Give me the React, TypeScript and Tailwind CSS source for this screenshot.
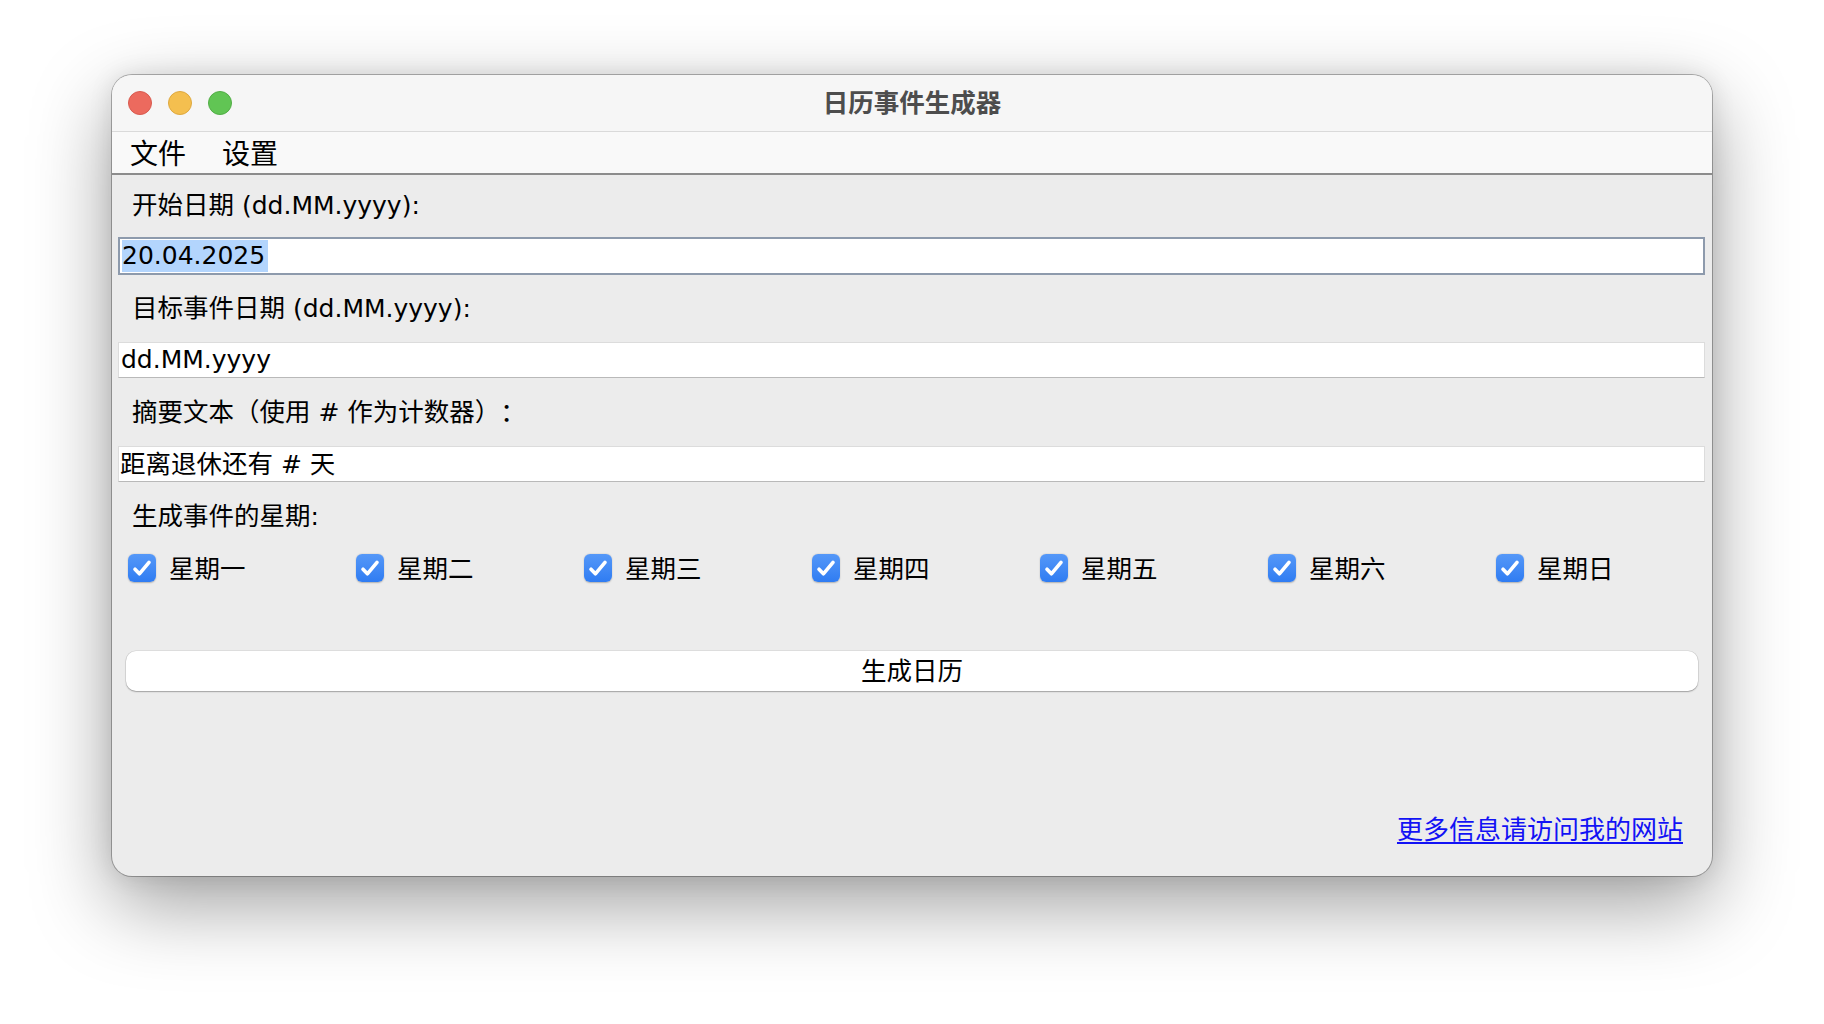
import React from "react";

const days = ["星期一", "星期二", "星期三", "星期四", "星期五", "星期六", "星期日"];

function Lt({ children }: { children: React.ReactNode }) {
  return <span className="font-['DejaVu_Sans',sans-serif] text-[25px]">{children}</span>;
}

function Check() {
  return (
    <div className="w-[28px] h-[28px] rounded-[6px] bg-linear-to-b from-[#5598f8] to-[#2f7cf2] shadow-[0_0.5px_1.5px_rgba(0,0,0,0.25)] flex items-center justify-center shrink-0">
      <svg width="28" height="28" viewBox="0 0 28 28">
        <path d="M7 15.2 L11.4 19.8 L21 8.4" fill="none" stroke="#ffffff" strokeWidth="3.6" strokeLinecap="round" strokeLinejoin="round" />
      </svg>
    </div>
  );
}

export default function App() {
  return (
    <div className="w-[1824px] h-[1024px] bg-white pt-[75px] pl-[112px] font-['Noto_Sans_CJK_SC',sans-serif] text-black [text-spacing-trim:space-all]">
      <div className="w-[1600px] h-[801px] rounded-[20px] overflow-hidden flex flex-col bg-[#ececec] shadow-[0_0_0_1px_rgba(0,0,0,0.28),0_28px_80px_rgba(0,0,0,0.38),0_0_24px_rgba(0,0,0,0.10)]">
        {/* Title bar */}
        <div className="h-[57px] shrink-0 grid grid-cols-[1fr_auto_1fr] items-center bg-[#f6f6f6] border-b border-[#dadada]">
          <div className="flex items-center gap-[16px] pl-[16px]">
            <div className="w-[24px] h-[24px] rounded-full bg-[#ec6a5e] border border-[#d85a4f]" />
            <div className="w-[24px] h-[24px] rounded-full bg-[#f4bf4f] border border-[#dea83f]" />
            <div className="w-[24px] h-[24px] rounded-full bg-[#61c554] border border-[#52ad46]" />
          </div>
          <div className="text-[25.5px] font-bold text-[#4d4d4d] leading-[30px] mb-[4px]">日历事件生成器</div>
          <div />
        </div>
        {/* Menu bar */}
        <div className="h-[43px] shrink-0 flex items-center bg-[#f9f9f9] border-b-2 border-[#8c8c8c] pb-[2px]">
          <span className="px-[18px] text-[28px] leading-[32px]">文件</span>
          <span className="px-[18px] text-[28px] leading-[32px]">设置</span>
        </div>
        {/* Content */}
        <div className="flex-1 flex flex-col pl-[6px] pr-[7px] text-[25.5px]">
          <div className="h-[61px] flex items-center pl-[14px] pb-[2px] leading-[30px]">
            <span>开始日期<Lt> (dd.MM.yyyy):</Lt></span>
          </div>
          <div className="h-[40px] pt-[1px]">
            <div className="h-[38px] bg-white border-2 border-[#8d9aac] flex items-center pl-[2px]">
              <span className="inline-block h-[32px] leading-[32px] bg-[#b3d5fd] pr-[3px] font-['DejaVu_Sans',sans-serif] text-[25px]">20.04.2025</span>
            </div>
          </div>
          <div className="h-[64px] flex items-center pl-[14px] pb-[2px] leading-[30px]">
            <span>目标事件日期<Lt> (dd.MM.yyyy):</Lt></span>
          </div>
          <div className="h-[40px] pt-[2px]">
            <div className="h-[36px] bg-white border border-[#dcdcdc] border-b-[#b9b9b9] flex items-center pl-[2px] leading-[30px]">
              <Lt>dd.MM.yyyy</Lt>
            </div>
          </div>
          <div className="h-[64px] flex items-center pl-[14px] pb-[2px] leading-[30px]">
            <span>摘要文本（使用<Lt> # </Lt>作为计数器）：</span>
          </div>
          <div className="h-[40px] pt-[2px]">
            <div className="h-[36px] bg-white border border-[#dcdcdc] border-b-[#b9b9b9] flex items-center pl-[1px] pb-[1px] leading-[30px]">
              <span>距离退休还有<Lt> # </Lt>天</span>
            </div>
          </div>
          <div className="h-[64px] flex items-center pl-[14px] pb-[2px] leading-[30px]">
            <span>生成事件的星期<Lt>:</Lt></span>
          </div>
          <div className="h-[40px] flex items-center pl-[10px]">
            {days.map((d) => (
              <div key={d} className="w-[228px] shrink-0 flex items-center">
                <Check />
                <span className="ml-[13px] mb-[3px] leading-[30px]">{d}</span>
              </div>
            ))}
          </div>
          <div className="mt-[63px] ml-[8px] mr-[7px] h-[40px] rounded-[10px] bg-white shadow-[0_1px_1.5px_rgba(0,0,0,0.28),0_0_0_0.5px_rgba(0,0,0,0.12)] flex items-center justify-center pb-[4px] leading-[30px]">
            生成日历
          </div>
          <div className="mt-[122px] flex justify-end pr-[22px]">
            <span className="leading-[30px] text-[26px] text-[#1212f5] underline decoration-[2px] underline-offset-[3px]">更多信息请访问我的网站</span>
          </div>
        </div>
      </div>
    </div>
  );
}
